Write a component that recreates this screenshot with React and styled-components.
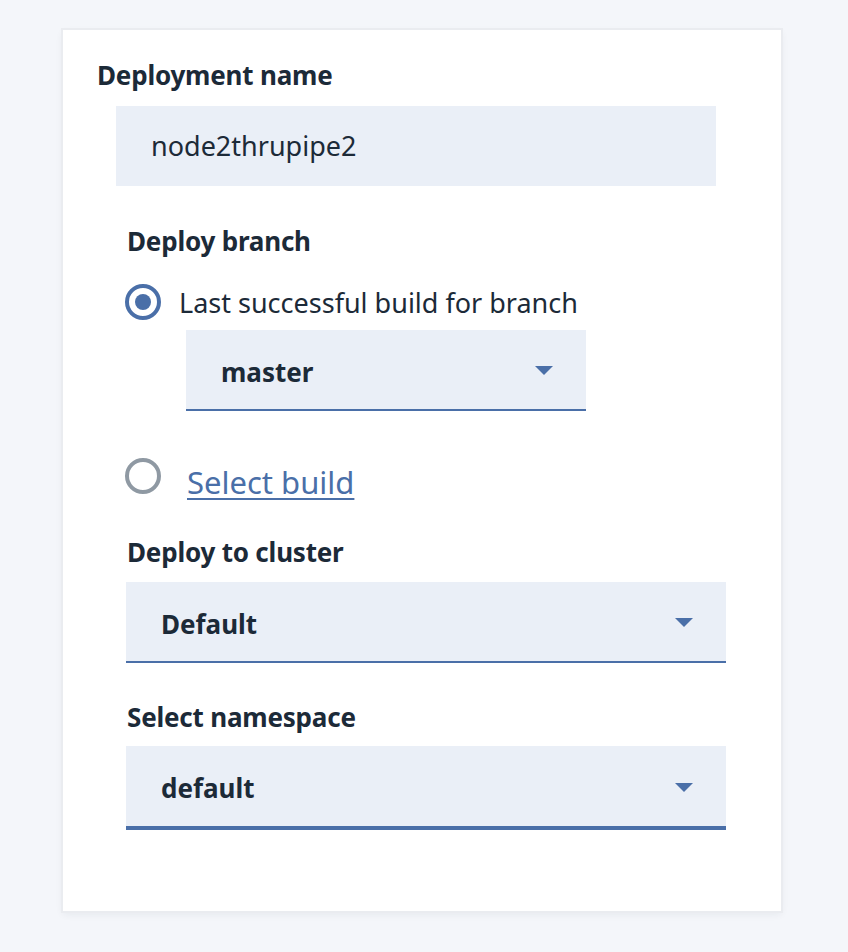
import React from 'react'
import styled, { createGlobalStyle } from 'styled-components'

const GlobalStyle = createGlobalStyle`
    html, body {
        margin:0;
        padding:0;
        background:#f4f6fa;
    }
    body {
        font-family:"Noto Sans", "Open Sans", sans-serif;
        color:#1c2a38;
    }
`;

const Page = styled.div`
    width:848px;
    height:952px;
    padding:30px 0 0 63px;
    box-sizing:border-box;
`;

const Card = styled.section`
    width:718px;
    height:881px;
    box-sizing:border-box;
    background:#fff;
    padding:29px 0 0 34px;
    box-shadow:0 0 0 2px #eaecf0, 0 3px 8px rgba(30,40,60,0.07);
    display:flex;
    flex-direction:column;
    align-items:flex-start;
`;

const Label = styled.div`
    font-size:26px;
    line-height:32px;
    font-weight:700;
    letter-spacing:-0.2px;
    margin:${({$mt})=>$mt||0}px 0 0 ${({$ml})=>$ml||0}px;
`;

const TextInput = styled.div`
    width:600px;
    height:80px;
    box-sizing:border-box;
    margin:15px 0 0 19px;
    padding:0 0 2px 35px;
    background:#eaeff7;
    display:flex;
    align-items:center;
    font-size:27px;
`;

const RadioRow = styled.div`
    display:flex;
    align-items:center;
    height:36px;
    margin:${({$mt})=>$mt}px 0 0 28px;
    font-size:${({$fs})=>$fs || 27}px;
`;

const Radio = styled.span`
    flex:none;
    width:36px;
    height:36px;
    box-sizing:border-box;
    border-radius:50%;
    border:4px solid ${({$checked})=>$checked ? '#4a6fa8' : '#8f99a3'};
    display:flex;
    align-items:center;
    justify-content:center;
    margin-right:${({$checked})=>$checked ? 18 : 26}px;

    &::after{
        content:'';
        display:${({$checked})=>$checked ? 'block' : 'none'};
        width:16px;
        height:16px;
        border-radius:50%;
        background:#4a6fa8;
    }
`;

const Link = styled.a`
    margin-top:11px;
    color:#4a6fa8;
    text-decoration:underline;
    text-underline-offset:4px;
    text-decoration-thickness:2px;
`;

const Select = styled.div`
    width:${({$w})=>$w}px;
    height:${({$h})=>$h}px;
    box-sizing:border-box;
    margin:${({$mt})=>$mt}px 0 0 ${({$ml})=>$ml}px;
    padding:4px 33px 0 35px;
    background:#eaeff7;
    border-bottom:${({$bw})=>$bw}px solid #4a6fa8;
    display:flex;
    align-items:center;
    justify-content:space-between;
    font-size:26px;
    font-weight:700;

    svg{
        margin-top:-2px;
    }
`;

const Caret = () => (
    <svg width="18" height="9" viewBox="0 0 18 9">
        <path d="M0 0 H18 L9 9 Z" fill="#4a6fa8" />
    </svg>
);

const App = () => {
  return (
    <Page>
        <GlobalStyle />
        <Card>
            <Label>Deployment name</Label>
            <TextInput>node2thrupipe2</TextInput>

            <Label $mt={39} $ml={30}>Deploy branch</Label>
            <RadioRow $mt={27}>
                <Radio $checked />
                <span>Last successful build for branch</span>
            </RadioRow>
            <Select $w={400} $h={81} $mt={10} $ml={89} $bw={2}>
                <span>master</span>
                <Caret />
            </Select>
            <RadioRow $mt={47} $fs={31}>
                <Radio />
                <Link href="#">Select build</Link>
            </RadioRow>

            <Label $mt={42} $ml={30}>Deploy to cluster</Label>
            <Select $w={600} $h={81} $mt={14} $ml={29} $bw={2}>
                <span>Default</span>
                <Caret />
            </Select>

            <Label $mt={38} $ml={30}>Select namespace</Label>
            <Select $w={600} $h={84} $mt={13} $ml={29} $bw={4}>
                <span>default</span>
                <Caret />
            </Select>
        </Card>
    </Page>
  )
}

export default App
